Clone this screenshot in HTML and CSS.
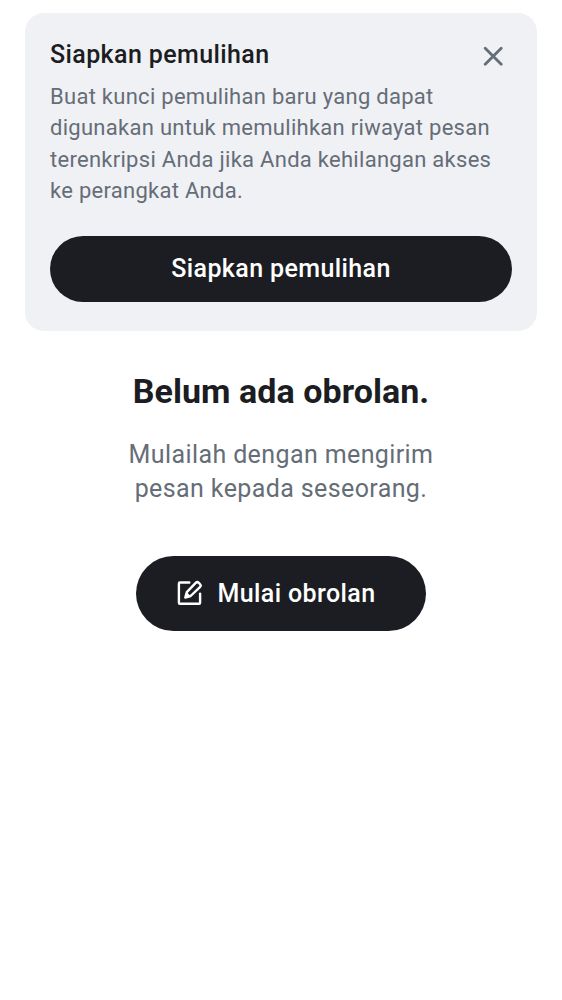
FILE: index.html
```html
<!DOCTYPE html>
<html lang="id">
<head>
<meta charset="utf-8">
<title>Obrolan</title>
<link rel="stylesheet" href="styles.css">
</head>
<body>
<section class="banner">
  <header class="banner-head">
    <h2 class="banner-title">Siapkan pemulihan</h2>
    <button class="close" aria-label="Tutup"><svg width="20" height="20" viewBox="0 0 20 20"><path d="M2.200 2.200l16 16M18.200 2.200l-16 16"/></svg></button>
  </header>
  <p class="banner-text">Buat kunci pemulihan baru yang dapat<br>digunakan untuk memulihkan riwayat pesan<br>terenkripsi Anda jika Anda kehilangan akses<br>ke perangkat Anda.</p>
  <button class="btn btn-wide">Siapkan pemulihan</button>
</section>
<main class="empty">
  <h1 class="empty-title">Belum ada obrolan.</h1>
  <p class="empty-text">Mulailah dengan mengirim<br>pesan kepada seseorang.</p>
  <button class="btn btn-start"><svg class="compose" width="26" height="26" viewBox="0 0 26 26"><path d="M12.300 2.500H2.900a1 1 0 0 0-1 1v19.300a1 1 0 0 0 1 1h19.200a1 1 0 0 0 1-1v-9.200"/><path d="M8.300 17.500l1.500-5.300 8.900-9.300a2.200 2.200 0 0 1 3.100 0l1.100 1.100a2.200 2.200 0 0 1 0 3.100L13.600 16z"/><path class="nib" d="M8.300 17.500l1.500-5.300 3.800 3.800z"/></svg><span>Mulai obrolan</span></button>
</main>
</body>
</html>
```
FILE: styles.css
```css
* { box-sizing: border-box; }
body { margin: 0; background: #fff; color: #1b1d22; font-family: Roboto, sans-serif; min-height: 1000px; }
h1, h2, p { margin: 0; }
button { border: 0; padding: 0; font-family: inherit; }
.banner { margin: 12.500px 25px 0; height: 318.500px; padding: 24.500px 25px 0; background: #f0f1f5; border-radius: 19px; }
.banner-head { display: flex; justify-content: space-between; height: 44.200px; padding-right: 9px; }
.banner-title { font-size: 25px; line-height: 35px; font-weight: 500; letter-spacing: 0.390px; white-space: nowrap; }
.close { background: none; width: 20px; height: 20px; margin-top: 9px; }
.close svg { display: block; fill: none; stroke: #656d77; stroke-width: 2.800; stroke-linecap: round; }
.banner-text { color: #656d77; font-size: 22px; line-height: 31.200px; letter-spacing: 0.280px; white-space: nowrap; }
.btn { display: flex; align-items: center; justify-content: center; background: #1b1d22; color: #fff; font-size: 25px; font-weight: 500; letter-spacing: 0.390px; border-radius: 40px; }
.btn-wide { width: 462px; height: 65.500px; margin-top: 30px; }
.empty { display: flex; flex-direction: column; align-items: center; text-align: center; padding-top: 37.500px; }
.empty-title { font-size: 34px; line-height: 44px; font-weight: 700; letter-spacing: 0.050px; }
.empty-text { margin-top: 25px; color: #656d77; font-size: 25px; line-height: 34.400px; letter-spacing: 0.390px; }
.btn-start { width: 290px; height: 75px; margin-top: 49.700px; padding-right: 10px; gap: 15px; }
.compose { fill: none; stroke: #fff; stroke-width: 2.400; stroke-linejoin: round; stroke-linecap: round; margin-bottom: 2px; }
.nib { fill: #fff; stroke: none; }
```
